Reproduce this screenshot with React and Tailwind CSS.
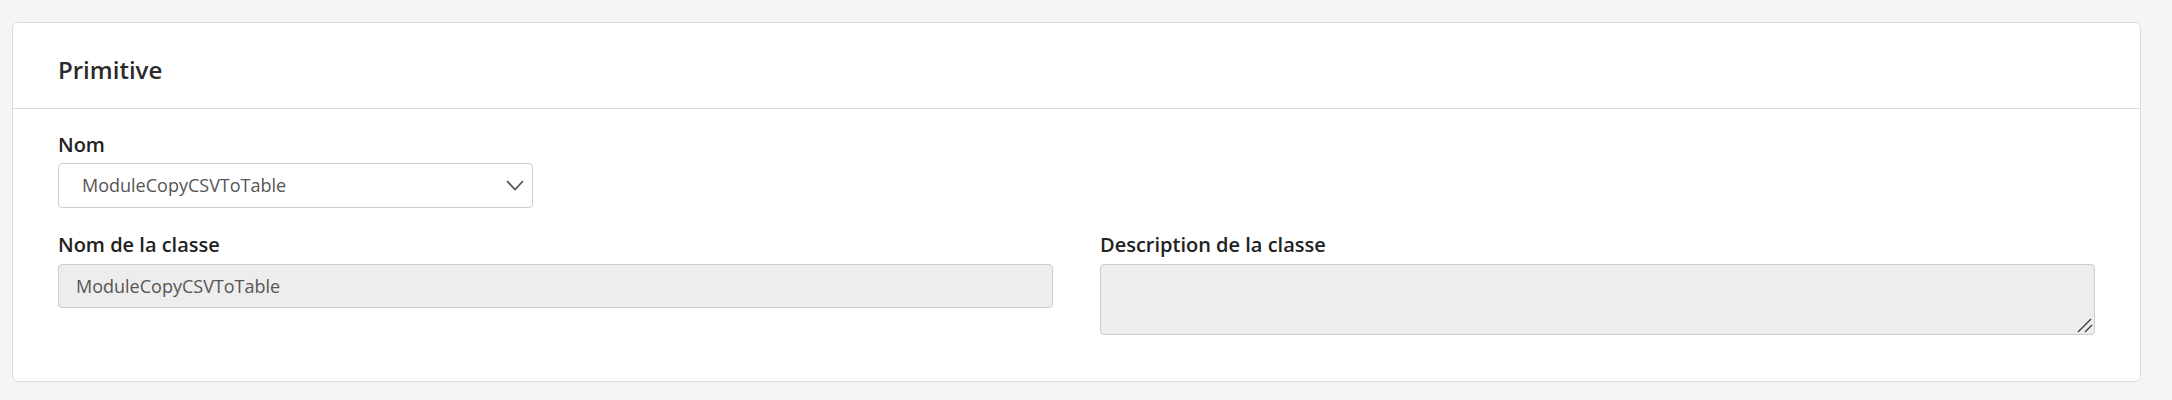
export default function App() {
  return (
    <div className="min-h-[400px] w-full bg-[#f4f5f7] pt-[22px] pl-3 pr-[31px] font-['Open_Sans',sans-serif]">
      <div className="rounded-md border border-[#dcdcdc] bg-white">
        <div className="border-b border-[#dcdcdc] pl-[45px] pt-[31px] pb-[22px]">
          <h2 className="text-[24px] leading-[32px] font-semibold text-[#2b2b2b]">Primitive</h2>
        </div>
        <div className="px-[45px] pt-[21px] pb-[46px]">
          <div className="flex flex-col">
            <label className="mb-[3px] text-[20px] leading-[30px] font-semibold text-[#222]">Nom</label>
            <div className="relative w-[475px]">
              <div className="flex h-[45px] items-center rounded border border-[#cccccc] bg-white pl-[23px] text-[18px] leading-[27px] text-[#555]">
                ModuleCopyCSVToTable
              </div>
              <svg className="absolute right-[9px] top-[17px]" width="18" height="11" viewBox="0 0 18 11" fill="none">
                <polyline points="1,1 9,9.5 17,1" stroke="#555" strokeWidth="1.8" />
              </svg>
            </div>
          </div>
          <div className="mt-[22px] grid grid-cols-2 gap-[47px]">
            <div className="flex flex-col">
              <label className="mb-[4px] text-[20px] leading-[30px] font-semibold text-[#222]">Nom de la classe</label>
              <div className="flex h-[44px] items-center rounded border border-[#cccccc] bg-[#ededed] pl-[17px] text-[18px] leading-[27px] text-[#555]">
                ModuleCopyCSVToTable
              </div>
            </div>
            <div className="flex flex-col">
              <label className="mb-[4px] text-[20px] leading-[30px] font-semibold text-[#222]">Description de la classe</label>
              <div className="relative">
                <textarea
                  readOnly
                  className="block h-[71px] w-full resize-none rounded border border-[#cccccc] bg-[#ededed] outline-none"
                />
                <svg className="pointer-events-none absolute right-[2px] bottom-[2px]" width="16" height="16" viewBox="0 0 16 16" fill="none">
                  <line x1="1" y1="15" x2="14" y2="2" stroke="#444" strokeWidth="1.4" />
                  <line x1="8" y1="15" x2="15" y2="8" stroke="#444" strokeWidth="1.4" />
                </svg>
              </div>
            </div>
          </div>
        </div>
      </div>
    </div>
  );
}
